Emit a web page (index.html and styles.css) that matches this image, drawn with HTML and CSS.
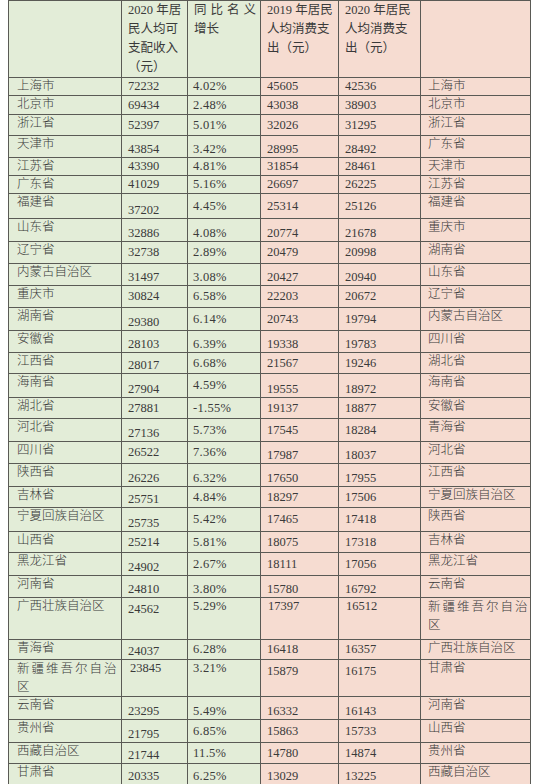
FILE: index.html
```html
<!DOCTYPE html>
<html lang="zh">
<head>
<meta charset="utf-8">
<title>居民人均可支配收入与消费支出</title>
<link rel="stylesheet" href="styles.css">
</head>
<body>
<table class="tbl">
<colgroup>
<col class="c1"><col class="c2"><col class="c3"><col class="c4"><col class="c5"><col class="c6">
</colgroup>
<tr class="head">
<td class="g"></td>
<td class="g">2020 年居<br>民人均可<br>支配收入<br>（元）</td>
<td class="g"><span class="sp">同比名义</span><br>增长</td>
<td class="p">2019 年居民<br>人均消费支<br>出（元）</td>
<td class="p">2020 年居民<br>人均消费支<br>出（元）</td>
<td class="p"></td>
</tr>
<tr class="h18"><td class="g n">上海市</td><td class="g">72232</td><td class="g m">4.02%</td><td class="p">45605</td><td class="p">42536</td><td class="p n">上海市</td></tr>
<tr class="h19"><td class="g n">北京市</td><td class="g">69434</td><td class="g m">2.48%</td><td class="p">43038</td><td class="p">38903</td><td class="p n">北京市</td></tr>
<tr class="h21"><td class="g n">浙江省</td><td class="g">52397</td><td class="g m">5.01%</td><td class="p">32026</td><td class="p">31295</td><td class="p n">浙江省</td></tr>
<tr class="h22"><td class="g n">天津市</td><td class="g lo">43854</td><td class="g m lo">3.42%</td><td class="p lo">28995</td><td class="p lo">28492</td><td class="p n">广东省</td></tr>
<tr class="h18"><td class="g n">江苏省</td><td class="g">43390</td><td class="g m">4.81%</td><td class="p">31854</td><td class="p">28461</td><td class="p n">天津市</td></tr>
<tr class="h18"><td class="g n">广东省</td><td class="g">41029</td><td class="g m">5.16%</td><td class="p">26697</td><td class="p">26225</td><td class="p n">江苏省</td></tr>
<tr class="h25"><td class="g n">福建省</td><td class="g lo">37202</td><td class="g m">4.45%</td><td class="p">25314</td><td class="p">25126</td><td class="p n">福建省</td></tr>
<tr class="h23"><td class="g n">山东省</td><td class="g lo">32886</td><td class="g m lo">4.08%</td><td class="p lo">20774</td><td class="p lo">21678</td><td class="p n">重庆市</td></tr>
<tr class="h22"><td class="g n">辽宁省</td><td class="g">32738</td><td class="g m">2.89%</td><td class="p">20479</td><td class="p">20998</td><td class="p n">湖南省</td></tr>
<tr class="h22"><td class="g n">内蒙古自治区</td><td class="g lo">31497</td><td class="g m lo">3.08%</td><td class="p lo">20427</td><td class="p lo">20940</td><td class="p n">山东省</td></tr>
<tr class="h22"><td class="g n">重庆市</td><td class="g">30824</td><td class="g m">6.58%</td><td class="p">22203</td><td class="p">20672</td><td class="p n">辽宁省</td></tr>
<tr class="h23"><td class="g n">湖南省</td><td class="g lo">29380</td><td class="g m">6.14%</td><td class="p">20743</td><td class="p">19794</td><td class="p n">内蒙古自治区</td></tr>
<tr class="h22"><td class="g n">安徽省</td><td class="g lo">28103</td><td class="g m lo">6.39%</td><td class="p lo">19338</td><td class="p lo">19783</td><td class="p n">四川省</td></tr>
<tr class="h21"><td class="g n">江西省</td><td class="g lo">28017</td><td class="g m">6.68%</td><td class="p">21567</td><td class="p">19246</td><td class="p n">湖北省</td></tr>
<tr class="h24"><td class="g n">海南省</td><td class="g lo">27904</td><td class="g m">4.59%</td><td class="p lo">19555</td><td class="p lo">18972</td><td class="p n">海南省</td></tr>
<tr class="h21"><td class="g n">湖北省</td><td class="g">27881</td><td class="g m">-1.55%</td><td class="p">19137</td><td class="p">18877</td><td class="p n">安徽省</td></tr>
<tr class="h23"><td class="g n">河北省</td><td class="g lo">27136</td><td class="g m">5.73%</td><td class="p">17545</td><td class="p">18284</td><td class="p n">青海省</td></tr>
<tr class="h22"><td class="g n">四川省</td><td class="g">26522</td><td class="g m">7.36%</td><td class="p lo">17987</td><td class="p lo">18037</td><td class="p n">河北省</td></tr>
<tr class="h23"><td class="g n">陕西省</td><td class="g lo">26226</td><td class="g m lo">6.32%</td><td class="p lo">17650</td><td class="p lo">17955</td><td class="p n">江西省</td></tr>
<tr class="h21"><td class="g n">吉林省</td><td class="g lo">25751</td><td class="g m">4.84%</td><td class="p">18297</td><td class="p">17506</td><td class="p n">宁夏回族自治区</td></tr>
<tr class="h24"><td class="g n">宁夏回族自治区</td><td class="g lo">25735</td><td class="g m">5.42%</td><td class="p">17465</td><td class="p">17418</td><td class="p n">陕西省</td></tr>
<tr class="h21"><td class="g n">山西省</td><td class="g">25214</td><td class="g m">5.81%</td><td class="p">18075</td><td class="p">17318</td><td class="p n">吉林省</td></tr>
<tr class="h23"><td class="g n">黑龙江省</td><td class="g lo">24902</td><td class="g m">2.67%</td><td class="p">18111</td><td class="p">17056</td><td class="p n">黑龙江省</td></tr>
<tr class="h22"><td class="g n">河南省</td><td class="g lo">24810</td><td class="g m lo">3.80%</td><td class="p lo">15780</td><td class="p lo">16792</td><td class="p n">云南省</td></tr>
<tr class="h42"><td class="g n">广西壮族自治区</td><td class="g n2">24562</td><td class="g m n">5.29%</td><td class="p n">17397</td><td class="p n">16512</td><td class="p n two"><span class="sp2">新疆维吾尔自治</span><br>区</td></tr>
<tr class="h20"><td class="g n">青海省</td><td class="g lo">24037</td><td class="g m">6.28%</td><td class="p">16418</td><td class="p">16357</td><td class="p n">广西壮族自治区</td></tr>
<tr class="h37"><td class="g n two"><span class="sp2">新疆维吾尔自治</span><br>区</td><td class="g n">23845</td><td class="g m n">3.21%</td><td class="p n2">15879</td><td class="p n2">16175</td><td class="p n">甘肃省</td></tr>
<tr class="h23"><td class="g n">云南省</td><td class="g lo">23295</td><td class="g m lo">5.49%</td><td class="p lo">16332</td><td class="p lo">16143</td><td class="p n">河南省</td></tr>
<tr class="h23"><td class="g n">贵州省</td><td class="g lo">21795</td><td class="g m">6.85%</td><td class="p">15863</td><td class="p">15733</td><td class="p n">山西省</td></tr>
<tr class="h21"><td class="g n">西藏自治区</td><td class="g lo">21744</td><td class="g m">11.5%</td><td class="p">14780</td><td class="p">14874</td><td class="p n">贵州省</td></tr>
<tr class="h21"><td class="g n">甘肃省</td><td class="g lo">20335</td><td class="g m lo">6.25%</td><td class="p lo">13029</td><td class="p lo">13225</td><td class="p n">西藏自治区</td></tr>
</table>
</body>
</html>
```
FILE: styles.css
```css
html, body {
  margin: 0;
  padding: 0;
  background: #ffffff;
}
body {
  width: 540px;
  height: 784px;
  overflow: hidden;
  font-family: "Liberation Serif", "Noto Sans CJK SC", serif;
  color: #3a3a3a;
}
.tbl {
  margin: 0 0 0 8px;
  border-collapse: collapse;
  table-layout: fixed;
  width: 522px;
  font-size: 12.5px;
  line-height: 15px;
}
.c1 { width: 113px; }
.c2 { width: 66px; }
.c3 { width: 73px; }
.c4 { width: 78px; }
.c5 { width: 82px; }
.c6 { width: 110px; }
.tbl td {
  border: 1px solid #5a5a55;
  padding: 0 4px 0 6px;
  vertical-align: middle;
  overflow: hidden;
  white-space: nowrap;
}
.tbl td.n {
  vertical-align: top;
  padding-top: 1px;
  padding-left: 8px;
  font-weight: 300;
}
.tbl td.p.n { padding-left: 7px; }
.tbl td.n2 {
  vertical-align: top;
  padding-top: 4px;
}
.tbl td.lo {
  vertical-align: bottom;
  padding-bottom: 0;
}
.tbl td.m {
  padding-left: 5px;
  letter-spacing: 0.3px;
}
.tbl td.two { line-height: 18px; padding-top: 0; }
.g { background: #e3edd8; }
.p { background: #f6dcd1; }
.tbl td.p:nth-child(4) { border-left-color: #8a4a48; }
.head { height: 77px; }
.head td {
  vertical-align: top;
  line-height: 19px;
  padding-top: 0;
  font-size: 12.5px;
}
.sp { letter-spacing: 4px; }
.sp2 { letter-spacing: 2px; white-space: nowrap; }
.h18 { height: 18px; }
.h19 { height: 19px; }
.h20 { height: 20px; }
.h21 { height: 21px; }
.h22 { height: 22px; }
.h23 { height: 23px; }
.h24 { height: 24px; }
.h25 { height: 25px; }
.h37 { height: 37px; }
.h42 { height: 42px; }
```
